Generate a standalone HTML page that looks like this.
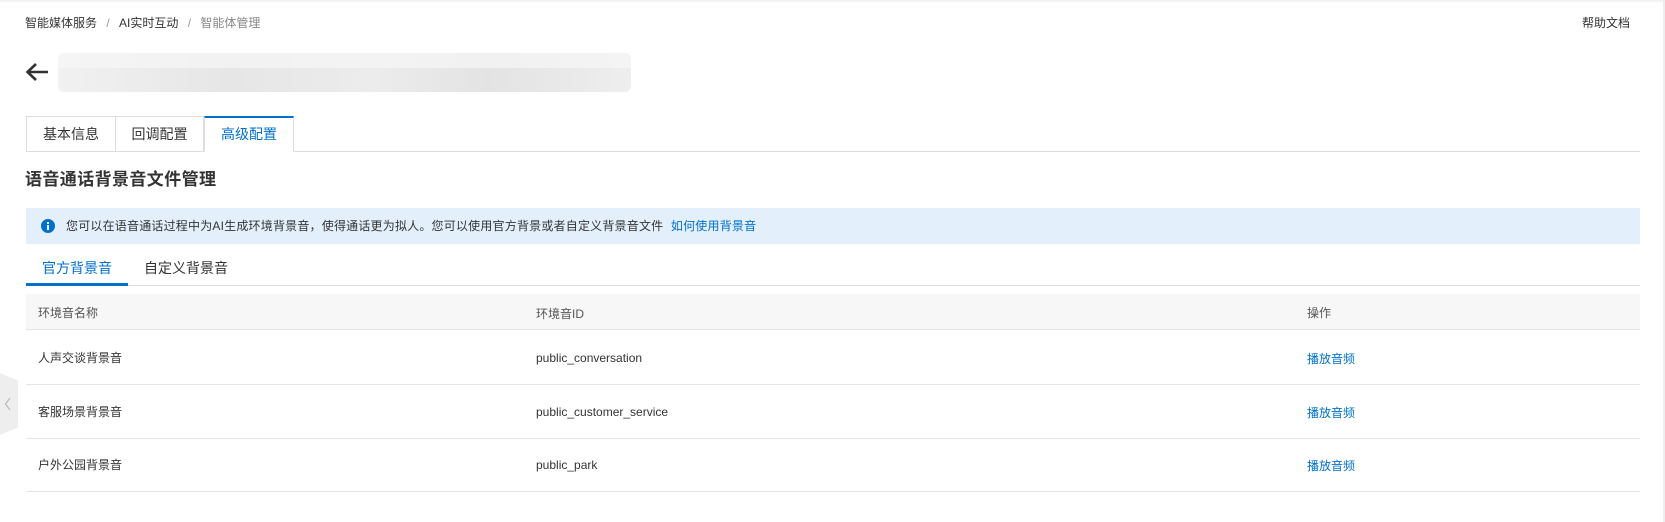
<!DOCTYPE html>
<html><head><meta charset="utf-8"><style>
*{margin:0;padding:0;box-sizing:border-box}
body{width:1665px;height:522px;background:#fff;font-family:"Liberation Sans","Noto Sans CJK SC",sans-serif;color:#333;position:relative;overflow:hidden;font-size:12px}
.a{position:absolute;white-space:nowrap}
.blue{color:#0070cc}
</style></head><body>
<div class="a" style="left:0;top:0;width:1665px;height:3px;background:linear-gradient(#eee,#fff)"></div>
<div class="a" style="right:0;top:0;width:2px;height:522px;background:#eee"></div>

<div class="a" style="left:25px;top:15px;font-size:12px;line-height:16px;color:#333">智能媒体服务 <span style="color:#999;margin:0 6px">/</span> AI实时互动 <span style="color:#999;margin:0 6px">/</span> <span style="color:#888">智能体管理</span></div>
<div class="a" style="left:1582px;top:15px;font-size:12px;line-height:16px">帮助文档</div>

<svg class="a" style="left:24px;top:61px" width="26" height="22" viewBox="0 0 26 22"><path d="M24 11H4M12 3L3.5 11 12 19" stroke="#333" stroke-width="2.6" fill="none"/></svg>
<div class="a" style="left:58px;top:53px;width:573px;height:39px;border-radius:6px;background:linear-gradient(90deg,#f1f1f1,#e6e6e6 30%,#ececec 55%,#e3e3e3 75%,#eee);"></div>
<div class="a" style="left:58px;top:53px;width:573px;height:15px;border-radius:6px 6px 0 0;background:#f6f6f6;opacity:.7"></div>

<div class="a" style="left:26px;top:151px;width:1614px;height:1px;background:#ddd"></div>
<div class="a" style="left:26px;top:116px;width:89px;height:36px;border:1px solid #ddd;border-right:none;font-size:14px;line-height:34px;text-align:center;color:#333">基本信息</div>
<div class="a" style="left:115px;top:116px;width:89px;height:36px;border:1px solid #ddd;font-size:14px;line-height:34px;text-align:center;color:#333">回调配置</div>
<div class="a" style="left:204px;top:116px;width:90px;height:36px;border:1px solid #ddd;border-top:2px solid #0070cc;border-bottom:1px solid #fff;background:#fff;font-size:14px;line-height:33px;text-align:center;color:#0070cc">高级配置</div>

<div class="a" style="left:25px;top:169px;font-size:17px;font-weight:bold;line-height:22px;color:#333;letter-spacing:0.4px">语音通话背景音文件管理</div>

<div class="a" style="left:26px;top:208px;width:1614px;height:36px;background:#e3f0fb"></div>
<svg class="a" style="left:41px;top:219px" width="14" height="14" viewBox="0 0 14 14"><circle cx="7" cy="7" r="7" fill="#0070cc"/><rect x="6" y="6" width="2" height="5" fill="#fff"/><rect x="6" y="3" width="2" height="2" fill="#fff"/></svg>
<div class="a" style="left:66px;top:218px;font-size:12px;line-height:16px;color:#333;letter-spacing:0.2px">您可以在语音通话过程中为AI生成环境背景音，使得通话更为拟人。您可以使用官方背景或者自定义背景音文件 <span class="blue" style="margin-left:4px">如何使用背景音</span></div>

<div class="a" style="left:42px;top:259px;font-size:14px;line-height:18px;color:#0070cc">官方背景音</div>
<div class="a" style="left:144px;top:259px;font-size:14px;line-height:18px;color:#333">自定义背景音</div>
<div class="a" style="left:26px;top:285px;width:1614px;height:1px;background:#ddd"></div>
<div class="a" style="left:26px;top:283px;width:102px;height:3px;background:#0070cc"></div>

<div class="a" style="left:26px;top:294px;width:1614px;height:36px;background:#f7f7f7;border-bottom:1px solid #e5e5e5"></div>
<div class="a" style="left:38px;top:304px;color:#555">环境音名称</div>
<div class="a" style="left:536px;top:305px;color:#555">环境音ID</div>
<div class="a" style="left:1307px;top:304px;color:#555">操作</div>

<div class="a" style="left:38px;top:349px">人声交谈背景音</div>
<div class="a" style="left:536px;top:351px">public_conversation</div>
<div class="a blue" style="left:1307px;top:350px">播放音频</div>
<div class="a" style="left:26px;top:384px;width:1614px;height:1px;background:#e5e5e5"></div>

<div class="a" style="left:38px;top:403px">客服场景背景音</div>
<div class="a" style="left:536px;top:405px">public_customer_service</div>
<div class="a blue" style="left:1307px;top:404px">播放音频</div>
<div class="a" style="left:26px;top:438px;width:1614px;height:1px;background:#e5e5e5"></div>

<div class="a" style="left:38px;top:456px">户外公园背景音</div>
<div class="a" style="left:536px;top:458px">public_park</div>
<div class="a blue" style="left:1307px;top:457px">播放音频</div>
<div class="a" style="left:26px;top:491px;width:1614px;height:1px;background:#e5e5e5"></div>

<div class="a" style="left:0;top:373px;width:18px;height:62px;background:#eee;clip-path:polygon(0 0,100% 12%,100% 88%,0 100%)"></div>
<svg class="a" style="left:4px;top:397px" width="8" height="14" viewBox="0 0 8 14"><path d="M6 1L1.5 7 6 13" stroke="#aaa" stroke-width="1" fill="none"/></svg>
</body></html>
